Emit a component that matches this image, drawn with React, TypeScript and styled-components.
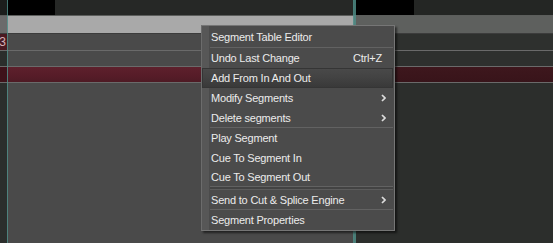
import React from "react";
import styled, { createGlobalStyle } from "styled-components";

const GlobalStyle = createGlobalStyle`
  html, body {
    margin: 0;
    padding: 0;
    background: #2a2c2a;
    overflow: hidden;
  }
`;

const Stage = styled.div(() => ({
  position: "relative",
  width: "553px",
  height: "243px",
  overflow: "hidden",
  background: "#2c2e2c",
  fontFamily: '"Liberation Sans", Arial, sans-serif',
  display: "flex",
  flexDirection: "column",
}));

const Ruler = styled.div(() => ({
  display: "flex",
  height: "15px",
  borderBottom: "1px solid #5c5e5c",
  flexShrink: 0,
}));

const RulerPart = styled.div<{ w?: number; c: string }>((props) => ({
  width: props.w ? `${props.w}px` : "auto",
  flex: props.w ? "none" : 1,
  background: props.c,
}));

const Row = styled.div<{ h: number; line?: string; grow?: boolean }>(
  (props) => ({
    display: "grid",
    gridTemplateColumns: "7px 347px 1fr",
    height: props.grow ? "auto" : `${props.h}px`,
    flex: props.grow ? 1 : "none",
    borderTop: props.line ? `1px solid ${props.line}` : "none",
  })
);

const Cell = styled.div<{ c: string }>((props) => ({
  background: props.c,
  overflow: "hidden",
  position: "relative",
}));

const TrackLabel = styled.span(() => ({
  position: "absolute",
  right: "1px",
  top: "1px",
  fontSize: "12px",
  color: "#d6b0b8",
  lineHeight: "14px",
}));

const Playhead = styled.div<{ x: number; w: number }>((props) => ({
  position: "absolute",
  top: 0,
  bottom: 0,
  left: `${props.x}px`,
  width: `${props.w}px`,
  background: "#4f8c86",
  opacity: 0.85,
}));

const Menu = styled.div(() => ({
  position: "absolute",
  left: "201px",
  top: "25px",
  width: "192px",
  padding: "0 0 1px 0",
  border: "1px solid #767676",
  borderLeftColor: "#6c6c6c",
  background: "linear-gradient(to right, #575757 0 7px, #4b4b4b 7px)",
  boxShadow: "2px 2px 2px rgba(0, 0, 0, 0.55)",
  display: "flex",
  flexDirection: "column",
  color: "#ececec",
  fontSize: "11px",
  letterSpacing: "-0.2px",
}));

const Item = styled.div<{ h: number; active?: boolean }>((props) => ({
  height: `${props.h}px`,
  display: "flex",
  alignItems: "center",
  boxSizing: "border-box",
  padding: props.active ? "0 0 0 8px" : "0 0 0 9px",
  marginRight: "1px",
  border: props.active ? "1px solid #353535" : "none",
  background: props.active
    ? "linear-gradient(#494949, #434343 45%, #393939)"
    : "transparent",
  whiteSpace: "nowrap",
}));

const Label = styled.span(() => ({ flex: 1 }));

const Shortcut = styled.span(() => ({ marginRight: "11px" }));

const Arrow = styled.svg(() => ({
  width: "5px",
  height: "8px",
  marginRight: "7px",
}));

const Separator = styled.div<{ double?: boolean }>((props) => ({
  height: props.double ? "4px" : "1px",
  marginLeft: "8px",
  marginRight: "1px",
  boxSizing: "border-box",
  borderTop: "1px solid #626262",
  borderBottom: props.double ? "1px solid #5c5c5c" : "none",
  background: props.double ? "#434343" : "transparent",
  flexShrink: 0,
}));

const Chevron = () => (
  <Arrow viewBox="0 0 5 8">
    <path d="M1 1 L4 4 L1 7" fill="none" stroke="#dcdcdc" strokeWidth="1.7" />
  </Arrow>
);

type Entry =
  | { sep: "single" | "double" }
  | { label: string; h: number; shortcut?: string; sub?: boolean; active?: boolean };

const entries: Entry[] = [
  { label: "Segment Table Editor", h: 21 },
  { sep: "single" },
  { label: "Undo Last Change", h: 20, shortcut: "Ctrl+Z" },
  { label: "Add From In And Out", h: 20, active: true },
  { label: "Modify Segments", h: 20, sub: true },
  { label: "Delete segments", h: 19, sub: true },
  { sep: "single" },
  { label: "Play Segment", h: 20 },
  { label: "Cue To Segment In", h: 19 },
  { label: "Cue To Segment Out", h: 19 },
  { sep: "double" },
  { label: "Send to Cut & Splice Engine", h: 19, sub: true },
  { sep: "single" },
  { label: "Segment Properties", h: 19 },
];

const tracks = [
  { h: 16, line: "#3c3c3c", label: "#4a1a22", inside: "#4a4a4a", outside: "#2e302e", text: "3" },
  { h: 15, line: "#6a6a6a", label: "#2b2e2c", inside: "#4a4a4a", outside: "#2e302e" },
  {
    h: 15,
    line: "#6a6a6a",
    label: "#3e121a",
    inside: "linear-gradient(#5e202c, #561c28 60%, #4e1a24)",
    outside: "linear-gradient(#3e171d, #38141a)",
  },
];

const App = (): JSX.Element => {
  return (
    <Stage>
      <GlobalStyle />
      <Ruler>
        <RulerPart w={7} c="#1c1e1c" />
        <RulerPart w={48} c="#000000" />
        <RulerPart w={299} c="#262826" />
        <RulerPart w={60} c="#000000" />
        <RulerPart c="#242624" />
      </Ruler>
      <Row h={17}>
        <Cell c="#6b6b6b" />
        <Cell c="#a9a9a9" />
        <Cell c="#5e605e" />
      </Row>
      {tracks.map((t, i) => (
        <Row key={i} h={t.h} line={t.line}>
          <Cell c={t.label}>{t.text && <TrackLabel>{t.text}</TrackLabel>}</Cell>
          <Cell c={t.inside} />
          <Cell c={t.outside} />
        </Row>
      ))}
      <Row h={0} line="#6a6a6a" grow>
        <Cell c="#2b2e2c" />
        <Cell c="#4a4a4a" />
        <Cell c="#2c2e2c" />
      </Row>

      <Playhead x={7} w={1} />
      <Playhead x={353} w={3} />

      <Menu>
        {entries.map((e, i) =>
          "sep" in e ? (
            <Separator key={i} double={e.sep === "double"} />
          ) : (
            <Item key={i} h={e.h} active={e.active}>
              <Label>{e.label}</Label>
              {e.shortcut && <Shortcut>{e.shortcut}</Shortcut>}
              {e.sub && <Chevron />}
            </Item>
          )
        )}
      </Menu>
    </Stage>
  );
};

export default App;
